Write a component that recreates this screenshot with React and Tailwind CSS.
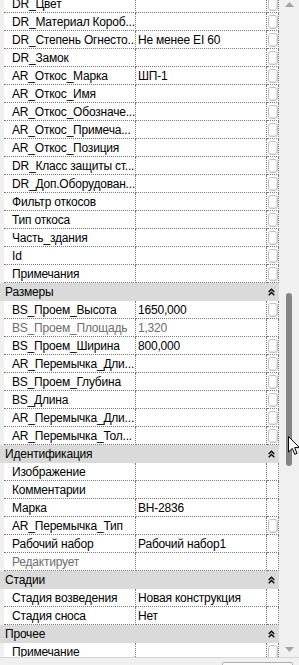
import React from "react";

// type: "h" header, "i" item. box: show the small rounded edit box
const rows = [
  { t: "i", n: "DR_Цвет", box: true },
  { t: "i", n: "DR_Материал Короб...", box: true },
  { t: "i", n: "DR_Степень Огнесто...", v: "Не менее EI 60", box: true },
  { t: "i", n: "DR_Замок", box: true },
  { t: "i", n: "AR_Откос_Марка", v: "ШП-1", box: true },
  { t: "i", n: "AR_Откос_Имя", box: true },
  { t: "i", n: "AR_Откос_Обозначе...", box: true },
  { t: "i", n: "AR_Откос_Примеча...", box: true },
  { t: "i", n: "AR_Откос_Позиция", box: true },
  { t: "i", n: "DR_Класс защиты ст...", box: true },
  { t: "i", n: "DR_Доп.Оборудован...", box: true },
  { t: "i", n: "Фильтр откосов", box: true },
  { t: "i", n: "Тип откоса", box: true },
  { t: "i", n: "Часть_здания", box: true },
  { t: "i", n: "Id", box: true },
  { t: "i", n: "Примечания", box: true },
  { t: "h", n: "Размеры" },
  { t: "i", n: "BS_Проем_Высота", v: "1650,000", box: true },
  { t: "i", n: "BS_Проем_Площадь", v: "1,320", muted: true },
  { t: "i", n: "BS_Проем_Ширина", v: "800,000", box: true },
  { t: "i", n: "AR_Перемычка_Дли...", box: true },
  { t: "i", n: "BS_Проем_Глубина", box: true },
  { t: "i", n: "BS_Длина", box: true },
  { t: "i", n: "AR_Перемычка_Дли...", box: true },
  { t: "i", n: "AR_Перемычка_Тол...", box: true },
  { t: "h", n: "Идентификация" },
  { t: "i", n: "Изображение" },
  { t: "i", n: "Комментарии" },
  { t: "i", n: "Марка", v: "ВН-2836" },
  { t: "i", n: "AR_Перемычка_Тип", box: true },
  { t: "i", n: "Рабочий набор", v: "Рабочий набор1" },
  { t: "i", n: "Редактирует", muted: true },
  { t: "h", n: "Стадии" },
  { t: "i", n: "Стадия возведения", v: "Новая конструкция" },
  { t: "i", n: "Стадия сноса", v: "Нет" },
  { t: "h", n: "Прочее" },
  { t: "i", n: "Примечание", box: true },
];

function Collapse() {
  return (
    <svg width="7" height="8" viewBox="0 0 7 8" fill="none">
      <path d="M0.7 4 L3.5 1.2 L6.3 4" stroke="#000" strokeWidth="1.3" />
      <path d="M0.7 7.3 L3.5 4.5 L6.3 7.3" stroke="#000" strokeWidth="1.3" />
    </svg>
  );
}

function HeaderRow({ name }) {
  return (
    <div className="flex h-[18px] shrink-0 items-center bg-[#dadada] pl-[5px]">
      <span className="flex-1 whitespace-nowrap">{name}</span>
      <span className="flex w-[12px] items-center pl-[1px]">
        <Collapse />
      </span>
    </div>
  );
}

function ItemRow({ row }) {
  const color = row.muted ? "text-[#6d6d6d]" : "text-black";
  return (
    <div className="flex h-[18px] shrink-0">
      <div className="w-[4px] shrink-0 bg-[#f0f0f0]" />
      <div
        className={`flex w-[132px] shrink-0 items-center overflow-hidden whitespace-nowrap border-r border-b border-dotted border-[#7a7a7a] bg-white pl-[8px] ${color}`}
      >
        {row.n}
      </div>
      <div
        className={`flex w-[131px] shrink-0 items-center overflow-hidden whitespace-nowrap border-r border-b border-dotted border-[#7a7a7a] bg-white pl-[2px] ${color}`}
      >
        {row.v || ""}
      </div>
      <div className="flex w-[12px] shrink-0 items-center justify-center border-r border-b border-dotted border-[#7a7a7a] bg-white">
        {row.box && (
          <div className="h-[14px] w-[10px] rounded-[3px] border border-[#c2c2c2] bg-white shadow-[inset_-1px_-1px_0_#e4e4e4]" />
        )}
      </div>
    </div>
  );
}

function Scrollbar() {
  return (
    <div className="flex w-[20px] shrink-0 flex-col items-center bg-[#f0f0f0]">
      <svg className="mt-[2px] shrink-0" width="9" height="5" viewBox="0 0 9 5">
        <path d="M0 5 L4.5 0 L9 5 Z" fill="#a3a3a3" />
      </svg>
      <div className="mt-[286px] h-[173px] w-[6px] shrink-0 rounded-[3px] bg-[#858585]" />
      <div className="flex-1" />
      <svg className="mb-[5px] shrink-0" width="9" height="5" viewBox="0 0 9 5">
        <path d="M0 0 L9 0 L4.5 5 Z" fill="#a3a3a3" />
      </svg>
    </div>
  );
}

function Cursor() {
  return (
    <svg
      className="absolute left-[288px] top-[436px]"
      width="12"
      height="20"
      viewBox="0 0 12 20"
    >
      <path
        d="M0.5 0.5 L0.5 16 L4.3 12.4 L6.8 18.3 L9 17.3 L6.6 11.6 L11.5 11.6 Z"
        fill="#fff"
        stroke="#000"
        strokeWidth="1"
        strokeLinejoin="miter"
      />
    </svg>
  );
}

export default function App() {
  return (
    <div
      className="relative flex h-[665px] w-[299px] flex-col overflow-hidden bg-[#f0f0f0] text-[12px] leading-none tracking-[-0.2px] text-black"
      style={{ fontFamily: '"Liberation Sans", Arial, sans-serif' }}
    >
      <div className="flex h-[657px] shrink-0">
        <div className="flex w-[279px] shrink-0 flex-col overflow-hidden bg-white">
          <div className="mt-[-5px] flex flex-col">
            {rows.map((r, i) =>
              r.t === "h" ? (
                <HeaderRow key={i} name={r.n} />
              ) : (
                <ItemRow key={i} row={r} />
              )
            )}
          </div>
        </div>
        <Scrollbar />
      </div>
      <div className="flex flex-1 justify-end border-t border-[#d6d6d6] bg-[#f0f0f0] pr-[6px] pt-[4px]">
        <div className="h-[22px] w-[71px] rounded-[2px] border border-[#adadad] bg-[#fdfdfd]" />
      </div>
      <Cursor />
    </div>
  );
}
